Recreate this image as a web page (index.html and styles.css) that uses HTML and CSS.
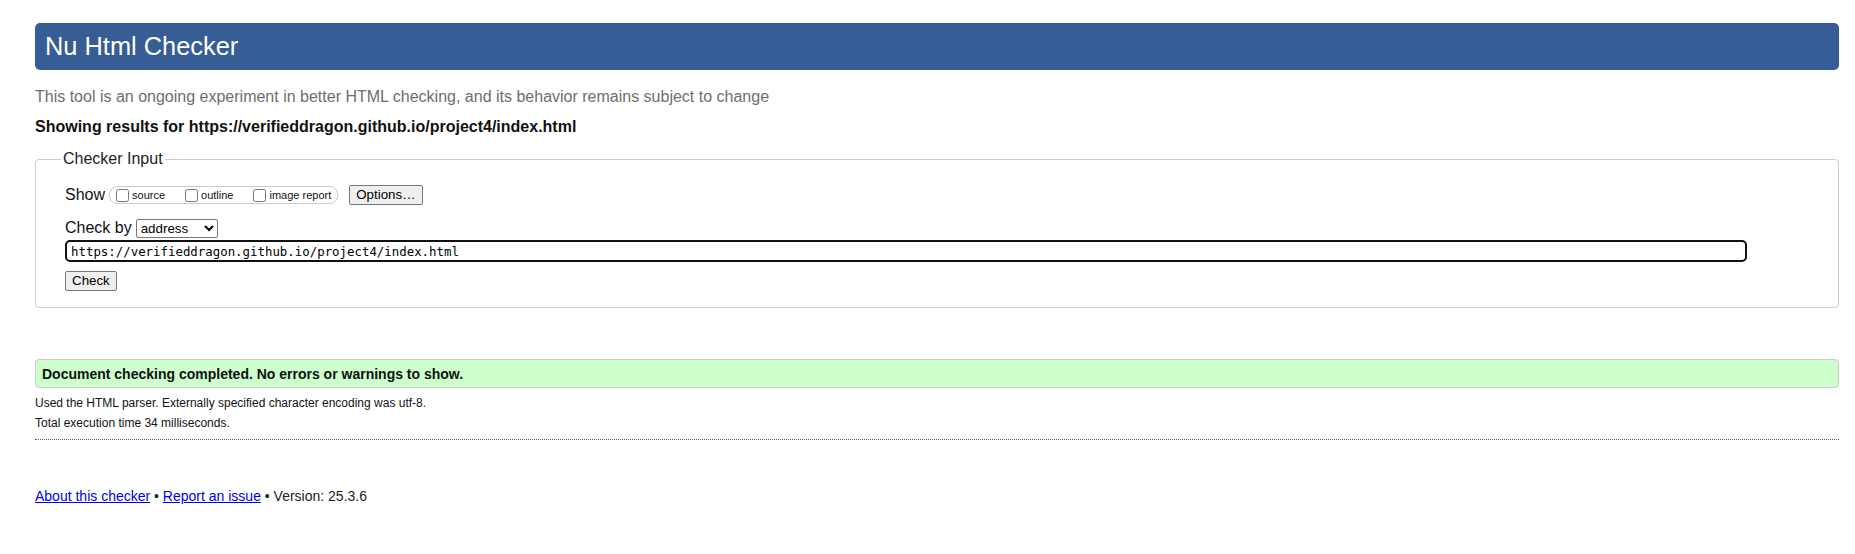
FILE: index.html
```html
<!DOCTYPE html>
<html lang="en">
<head>
<meta charset="utf-8">
<title>Nu Html Checker</title>
<link rel="stylesheet" href="styles.css">
</head>
<body>
<h1 class="title">Nu Html Checker</h1>
<p class="about">This tool is an ongoing experiment in better HTML checking, and its behavior remains subject to change</p>
<p class="results-for">Showing results for https://verifieddragon.github.io/project4/index.html</p>
<form class="checker-form">
  <fieldset class="checker-input">
    <legend class="legend">Checker Input</legend>
    <div class="row row-show">
      <span class="show-label">Show</span>
      <span class="show-options">
        <label class="opt"><input type="checkbox" class="cb">source</label>
        <label class="opt"><input type="checkbox" class="cb">outline</label>
        <label class="opt opt-last"><input type="checkbox" class="cb">image report</label>
      </span>
      <button type="button" class="btn btn-options">Options…</button>
    </div>
    <div class="row row-checkby">
      <label class="checkby-label">Check by</label>
      <select class="checkby-select"><option>address</option></select>
    </div>
    <div class="row row-url">
      <input type="text" class="url-input" value="https://verifieddragon.github.io/project4/index.html">
    </div>
    <div class="row row-submit">
      <button type="button" class="btn btn-check">Check</button>
    </div>
  </fieldset>
</form>
<p class="success">Document checking completed. No errors or warnings to show.</p>
<div class="details">
  <p class="detail">Used the HTML parser. Externally specified character encoding was utf-8.</p>
  <p class="detail">Total execution time 34 milliseconds.</p>
</div>
<hr class="separator">
<p class="footer"><a href="#" class="link">About this checker</a> • <a href="#" class="link">Report an issue</a> • Version: 25.3.6</p>
</body>
</html>
```
FILE: styles.css
```css
html, body {
  background: #fff;
}
body {
  margin: 0;
  padding: 23px 16px 0 35px;
  font-family: "Liberation Sans", Arial, sans-serif;
  color: #111;
}
.title {
  margin: 0;
  height: 47px;
  box-sizing: border-box;
  padding: 0 10px;
  line-height: 47px;
  font-size: 25.4px;
  font-weight: normal;
  color: #fff;
  background: #365d95;
  border-radius: 5px;
}
.about {
  margin: 18px 0 0;
  font-size: 16px;
  line-height: 18px;
  color: #6e6e6e;
}
.results-for {
  margin: 12px 0 0;
  font-size: 16px;
  line-height: 18px;
  font-weight: bold;
}
.checker-form {
  margin: 14px 0 0;
}
.checker-input {
  margin: 0;
  padding: 17px 29px 16px 29px;
  border: 1px solid #ccc;
  border-radius: 4px;
  min-width: 0;
}
.legend {
  padding: 0 2px;
  margin-left: -4px;
  font-size: 16px;
  line-height: 18px;
  color: #222;
}
.row {
  display: flex;
  align-items: center;
}
.row-show {
  height: 20px;
}
.show-label {
  font-size: 16px;
  line-height: 18px;
  margin-right: 4px;
}
.show-options {
  display: inline-flex;
  align-items: center;
  height: 16px;
  padding: 0 6px 0 2px;
  border: 1px solid #ccc;
  border-radius: 8px;
  font-size: 11px;
}
.opt {
  display: inline-flex;
  align-items: center;
  margin-right: 16px;
}
.opt-last {
  margin-right: 0;
}
.cb {
  width: 13px;
  height: 13px;
  margin: 0 3px 0 4px;
}
.btn {
  font-family: "Liberation Sans", Arial, sans-serif;
  font-size: 13.333px;
  height: 20px;
  padding: 0 6px;
  line-height: 16px;
  color: #000;
  background: #efefef;
  border: 1px solid #767676;
  border-radius: 2px;
}
.btn-options {
  margin-left: 11px;
}
.row-checkby {
  margin-top: 14px;
  height: 18px;
}
.checkby-label {
  font-size: 16px;
  line-height: 18px;
  margin-right: 4px;
}
.checkby-select {
  width: 82px;
  height: 19px;
  font-family: "Liberation Sans", Arial, sans-serif;
  font-size: 13.333px;
  color: #000;
  background: #fff;
  border: 1px solid #767676;
  border-radius: 2px;
}
.row-url {
  margin-top: 3px;
}
.url-input {
  width: 1682px;
  height: 22px;
  box-sizing: border-box;
  padding: 0 4px;
  font-family: "DejaVu Sans Mono", "Liberation Mono", monospace;
  font-size: 12.4px;
  color: #000;
  border: 2px solid #101010;
  border-radius: 5px;
  outline: none;
}
.row-submit {
  margin-top: 9px;
}
.success {
  margin: 51px 0 0;
  padding: 6px 6px 4px;
  font-size: 14px;
  line-height: 17px;
  font-weight: bold;
  background: #ccffcc;
  border: 1px solid #ccc;
  border-radius: 4px;
}
.details {
  margin-top: 5px;
}
.detail {
  margin: 0;
  font-size: 12px;
  line-height: 20px;
}
.separator {
  margin: 6px 0 0;
  height: 0;
  border: 0;
  border-top: 1px dotted #666;
}
.footer {
  margin: 48px 0 0;
  font-size: 14px;
  line-height: 16px;
  color: #222;
}
.link {
  color: #0000ee;
}
```
